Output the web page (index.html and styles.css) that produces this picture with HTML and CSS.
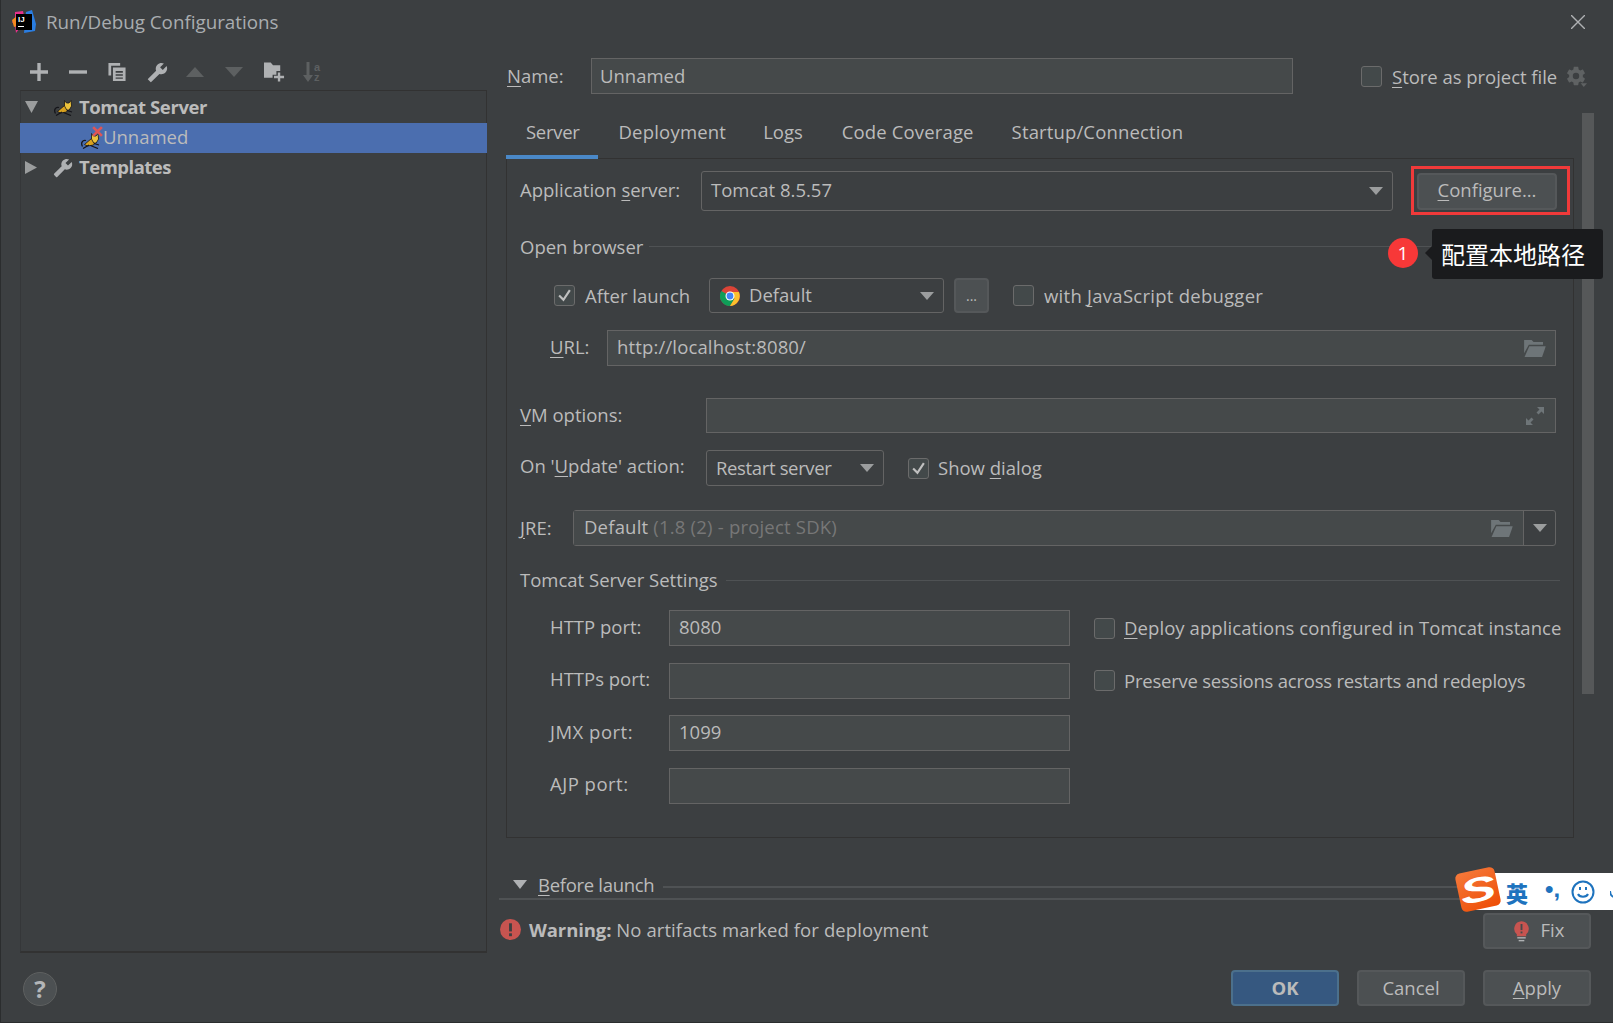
FILE: index.html
```html
<!DOCTYPE html>
<html lang="en">
<head>
<meta charset="utf-8">
<title>Run/Debug Configurations</title>
<link rel="stylesheet" href="styles.css">
</head>
<body>
<svg class="defs" width="0" height="0" aria-hidden="true">
  <defs>
    <symbol id="cat" viewBox="0 0 20 16">
      <path d="M1.500 13.500C-.5 10 1.500 6.500 5 7.500" fill="none" stroke="#15151a" stroke-width="1.300"/>
      <path d="M3.500 11.500L10.500 5.500 15 7.500 12.500 12 6.500 13z" fill="#d9a21f" stroke="#15151a" stroke-width=".8"/>
      <path d="M10.500 .5l2 2.500h2.500l2-2.500 .6 5.500-2.400 4h-2.500L10.500 6z" fill="#ecc23c" stroke="#15151a" stroke-width=".8"/>
      <path d="M2 15.500l6-3.500M9.500 12.500l7.500 3M13 10.500l5 1.500" fill="none" stroke="#15151a" stroke-width="1.300"/>
    </symbol>
    <symbol id="wrench" viewBox="0 0 24 24">
      <path transform="translate(24 0) scale(-1 1)" d="M22.700 19l-9.100-9.100c.9-2.300.4-5-1.500-6.900-2-2-5-2.400-7.400-1.300L9 6 6 9 1.600 4.700C.4 7.100.9 10.100 2.900 12.100c1.900 1.900 4.600 2.400 6.900 1.500l9.100 9.100c.4.4 1 .4 1.400 0l2.300-2.300c.5-.4.5-1.100.1-1.400z"/>
    </symbol>
    <symbol id="folder" viewBox="0 0 24 18">
      <path d="M1 0h8l2 2h10v3H6L1 14z"/>
      <path d="M6.500 6.500H24L20 18H1.500z"/>
    </symbol>
  </defs>
</svg>
<div class="window">
  <header class="titlebar">
    <svg class="app-icon" viewBox="0 0 24 24">
      <path d="M3 2l8-1 2 10-9 12-1-8-3-3 3-3z" fill="#e8308a"/>
      <path d="M0 10l5-4 3 9-6 2z" fill="#f58a1f"/>
      <path d="M14 2l6-2 4 14-1 7-11 2z" fill="#2a7de1"/>
      <rect x="4" y="4" width="16" height="16" fill="#000"/>
      <text x="6" y="12" class="app-icon-text">IJ</text>
      <rect x="6" y="16" width="6" height="1" fill="#fff"/>
    </svg>
    <span class="title">Run/Debug Configurations</span>
    <svg class="close" viewBox="0 0 14 14"><path d="M0 0l14 14M14 0L0 14"/></svg>
  </header>
  <main class="content">
    <aside class="left">
      <div class="toolbar">
        <span class="tool"><svg viewBox="0 0 16 16"><path class="bar" d="M6.500 0h3v6.500H16v3H9.500V16h-3V9.500H0v-3h6.500z"/></svg></span>
        <span class="tool"><svg viewBox="0 0 16 16"><rect class="bar" y="6.500" width="16" height="3"/></svg></span>
        <span class="tool"><svg viewBox="0 0 19 20"><path class="bar" d="M0 0h13v3H3v11H0z"/><path class="bar" d="M5 5h14v15H5zm3 4v1.800h8V9zm0 3.500v1.800h8v-1.800zM8 16v1.500h8V16z" fill-rule="evenodd"/></svg></span>
        <span class="tool tool-wide"><svg viewBox="0 0 24 24"><use href="#wrench" class="bar"/></svg></span>
        <span class="tool off"><svg viewBox="0 0 18 10"><path d="M9 0l9 10H0z"/></svg></span>
        <span class="tool off"><svg viewBox="0 0 18 10"><path d="M0 0h18L9 10z"/></svg></span>
        <span class="tool"><svg class="folder-plus" viewBox="0 0 22 20"><path class="bar" d="M0 0h7l2.500 3H17v6h-4v4H9v3H0z"/><path class="bar" d="M14.500 10.500h2.500v3.500h4v2.500h-4V20h-2.500v-3.500h-4V14h4z"/></svg></span>
        <span class="tool off sort">
          <svg viewBox="0 0 10 20"><path d="M3.500 0h3v13H10l-5 7-5-7h3.500z"/></svg>
          <span class="sort-letters">a<br>z</span>
        </span>
      </div>
      <div class="tree">
        <div class="tree-row">
          <svg class="twisty" viewBox="0 0 13 12"><path d="M0 0h13L6.500 12z"/></svg>
          <svg class="cat"><use href="#cat"/></svg>
          <b class="tx tree-server">Tomcat Server</b>
        </div>
        <div class="tree-row selected">
          <span class="cat-error">
            <svg class="cat"><use href="#cat"/></svg>
            <svg class="cat-x" viewBox="0 0 10 10"><path d="M1 1l8 8M9 1L1 9"/></svg>
          </span>
          <span class="tx">Unnamed</span>
        </div>
        <div class="tree-row">
          <svg class="twisty right-twisty" viewBox="0 0 12 13"><path d="M0 0l12 6.500L0 13z"/></svg>
          <svg class="tree-wrench" viewBox="0 0 24 24"><use href="#wrench"/></svg>
          <b class="tx tree-templates">Templates</b>
        </div>
      </div>
      <div class="help">?</div>
    </aside>

    <section class="right">
      <div class="upper">
        <div class="name-row">
          <label class="name-label tx1"><u>N</u>ame:</label>
          <div class="field name-field"><span class="tx1">Unnamed</span></div>
          <span class="check store-check"></span>
          <span class="store-label"><u>S</u>tore as project file</span>
          <svg class="gear" viewBox="0 0 24 24"><path d="M19.400 13c.1-.3.100-.7.100-1s0-.7-.1-1l2.200-1.600c.2-.2.300-.5.100-.7l-2-3.500c-.1-.2-.4-.3-.6-.2l-2.500 1c-.5-.4-1.100-.7-1.700-1l-.4-2.600c0-.2-.3-.4-.5-.4h-4c-.2 0-.5.2-.5.400l-.4 2.600c-.6.300-1.200.6-1.700 1l-2.500-1c-.2-.1-.5 0-.6.2l-2 3.500c-.1.200-.1.500.1.700L4.600 11c0 .3-.1.700-.1 1s0 .7.1 1l-2.200 1.600c-.2.200-.3.500-.1.700l2 3.500c.1.200.4.300.6.200l2.500-1c.5.400 1.100.7 1.700 1l.4 2.600c0 .2.300.4.500.4h4c.2 0 .5-.2.500-.4l.4-2.600c.6-.3 1.200-.6 1.700-1l2.500 1c.2.100.5 0 .6-.2l2-3.500c.1-.2.100-.5-.1-.7zM12 15.500a3.500 3.500 0 1 1 0-7 3.500 3.500 0 0 1 0 7z"/><path d="M17 20h7l-3.500 4z"/></svg>
        </div>
        <nav class="tabs">
          <span class="tab active">Server</span>
          <span class="tab tab-deploy">Deployment</span>
          <span class="tab tab-logs">Logs</span>
          <span class="tab tab-code">Code Coverage</span>
          <span class="tab tab-code">Startup/Connection</span>
        </nav>
        <div class="panel">
          <div class="row server-row">
            <label class="server-label tx">Application <u>s</u>erver:</label>
            <div class="combo server-combo"><span class="tx">Tomcat 8.5.57</span><i class="caret"></i></div>
            <button class="btn configure"><span class="tx"><u>C</u>onfigure...</span></button>
          </div>
          <div class="group-head browser-head"><span>Open browser</span><i class="rule"></i></div>
          <div class="row browser-row">
            <span class="check checked"><svg viewBox="0 0 14 14"><path d="M2 7l4 4 6-9"/></svg></span>
            <span class="after-label">After launch</span>
            <div class="combo browser-combo">
              <svg class="chrome" viewBox="0 0 20 20">
                <circle cx="10" cy="10" r="10" fill="#db4437"/>
                <path d="M10 10L1.300 5A10 10 0 0 0 10 20l4.500-7z" fill="#0f9d58"/>
                <path d="M10 6h8.900A10 10 0 0 1 10 20l4.500-7.500z" fill="#fbc02d"/>
                <circle cx="10" cy="10" r="4.500" fill="#fff"/>
                <circle cx="10" cy="10" r="3.400" fill="#4285f4"/>
              </svg>
              <span class="tx1">Default</span><i class="caret"></i>
            </div>
            <button class="btn dots">...</button>
            <span class="check js-check"></span>
            <span class="check-label js-label">with <u>J</u>avaScript debugger</span>
          </div>
          <div class="row url-row">
            <label class="url-label tx"><u>U</u>RL:</label>
            <div class="field url-field"><span class="tx url-text">http://localhost:8080/</span><svg class="folder" viewBox="0 0 24 18"><use href="#folder"/></svg></div>
          </div>
          <div class="row vm-row">
            <label class="opt-label tx1"><u>V</u>M options:</label>
            <div class="field vm-field"><svg class="expand" viewBox="0 0 18 18"><path d="M11 0h7v7l-2.500-2.500-3 3-2-2 3-3zM0 11l2.500 2.500 3-3 2 2-3 3L7 18H0z"/></svg></div>
          </div>
          <div class="row update-row">
            <label class="opt-label tx3">On '<u>U</u>pdate' action:</label>
            <div class="combo update-combo"><span class="tx1 restart">Restart server</span><i class="caret"></i></div>
            <span class="check checked dialog-check"><svg viewBox="0 0 14 14"><path d="M2 7l4 4 6-9"/></svg></span>
            <span class="check-label tx1">Show <u>d</u>ialog</span>
          </div>
          <div class="row jre-row">
            <label class="jre-label tx1"><u>J</u>RE:</label>
            <div class="jre-combo">
              <div class="jre-main"><span class="tx jre-text">Default <em>(1.8 (2) - project SDK)</em></span><svg class="folder" viewBox="0 0 24 18"><use href="#folder"/></svg></div>
              <div class="jre-drop"><i class="caret"></i></div>
            </div>
          </div>
          <div class="group-head tomcat-head"><span class="tx1">Tomcat Server Settings</span><i class="rule"></i></div>
          <div class="ports">
            <label class="tx">HTTP port:</label><div class="field"><span class="tx">8080</span></div>
            <div class="port-option"><span class="check"></span><span class="check-label tx1 deploy-label"><u>D</u>eploy applications configured in Tomcat instance</span></div>
            <label class="tx">HTTPs port:</label><div class="field"></div>
            <div class="port-option"><span class="check"></span><span class="check-label preserve-label">Preserve sessions across restarts and redeploys</span></div>
            <label class="tx wide-port">JMX port:</label><div class="field"><span class="tx">1099</span></div><div></div>
            <label class="tx wide-port">AJP port:</label><div class="field"></div><div></div>
          </div>
        </div>
      </div>
      <div class="before">
        <svg class="before-twisty tx3" viewBox="0 0 14 9"><path d="M0 0h14L7 9z"/></svg>
        <span class="tx3 before-label"><u>B</u>efore launch</span>
        <i class="rule"></i>
      </div>
      <div class="warning">
        <svg class="warn-icon tx" viewBox="0 0 22 22"><circle cx="11" cy="11" r="11" fill="#c75450"/><rect x="9.500" y="4.500" width="3" height="8.500" fill="#3c3f41"/><rect x="9.500" y="15" width="3" height="3" fill="#3c3f41"/></svg>
        <span class="tx warning-text"><b>Warning:</b> No artifacts marked for deployment</span>
        <button class="btn fix">
          <svg class="bulb" viewBox="0 0 16 22"><path d="M8 0a8 8 0 0 1 5 14v2H3v-2A8 8 0 0 1 8 0z" fill="#c75450"/><rect x="7" y="3" width="2" height="6.500" fill="#45494a"/><rect x="7" y="11" width="2" height="2" fill="#45494a"/><rect x="3.500" y="17" width="9" height="1.500" fill="#afb1b3"/><rect x="5" y="20" width="6" height="1.500" fill="#afb1b3"/></svg>
          <span class="tx">Fix</span>
        </button>
      </div>
      <div class="actions">
        <button class="btn primary"><span class="tx1">OK</span></button>
        <button class="btn"><span class="tx1">Cancel</span></button>
        <button class="btn"><span class="tx1"><u>A</u>pply</span></button>
      </div>
      <div class="scrollbar"></div>
    </section>
  </main>

  <div class="highlight"></div>
  <div class="callout">
    <span class="badge">1</span>
    <div class="tip">配置本地路径</div>
  </div>
  <div class="ime">
    <span class="ime-logo"><span>S</span></span>
    <span class="ime-zh">英</span>
    <span class="ime-punct">•,</span>
    <svg class="ime-smile" viewBox="0 0 24 24"><circle cx="12" cy="12" r="10.500"/><path d="M7 14c1.500 3.500 8.500 3.500 10 0"/><path d="M9 7v3M15 7v3"/></svg>
    <svg class="ime-mic" viewBox="0 0 14 24"><rect x="3" y="2" width="8" height="13" rx="4" fill="#1e73be"/><path d="M0 11c0 9 14 9 14 0M7 18v5" fill="none" stroke="#1e73be" stroke-width="2"/></svg>
  </div>
</div>
</body>
</html>
```

FILE: styles.css
```css
* { box-sizing: border-box; }
html, body { margin: 0; padding: 0; }
body { background: #3c3f41; font-family: "Open Sans", "Noto Sans CJK SC", sans-serif; font-size: 18.5px; color: #bbbbbb; }
.defs { position: absolute; }
u { text-underline-offset: 3px; text-decoration-thickness: 1px; }
em { font-style: normal; color: #777; }
i { display: block; }

/* optical lift of the text inside centred flex rows */
.tx1 { margin-bottom: 2px; }
.tx { margin-bottom: 4px; }
.tx3 { margin-bottom: 6px; }

.window { position: relative; width: 1613px; height: 1023px; overflow: hidden; background: #3c3f41; box-shadow: inset 1px -1px 0 #2b2d2e; display: flex; flex-direction: column; }

.titlebar { height: 44px; flex: none; display: flex; align-items: center; padding-left: 12px; }
.app-icon { width: 24px; height: 24px; flex: none; }
.app-icon-text { font: bold 8px "Liberation Sans", sans-serif; fill: #fff; }
.title { margin-left: 10px; color: #a9adb0; font-size: 18.800px; }
.close { width: 14px; height: 14px; margin-left: auto; margin-right: 28px; fill: none; stroke: #afb1b3; stroke-width: 1.400; }

.content { flex: 1; display: flex; min-height: 0; }
.left { width: 487px; flex: none; padding-left: 20px; display: flex; flex-direction: column; }
.toolbar { height: 46px; flex: none; display: flex; align-items: flex-start; padding-left: 10px; padding-top: 17px; }
.tool { width: 39px; height: 22px; flex: none; display: flex; align-items: center; justify-content: flex-start; fill: #afb1b3; }
.tool svg { width: 18px; height: 18px; }
.tool .bar { fill: #afb1b3; }
.tool.off svg { fill: #5d6061; }
.tool.off { fill: #5d6061; }
.tool-wide svg { width: 21px; height: 21px; }
.tool .folder-plus { width: 21px; height: 20px; }
.tool.sort svg { width: 10px; height: 20px; }
.sort-letters { margin-left: 1px; font: bold 11px/10px "Liberation Sans", sans-serif; color: #5d6061; }

.tree { height: 863px; flex: none; border: 1px solid #323232; border-left-color: #353739; border-bottom-width: 2px; padding-top: 2px; }
.tree-row { height: 30px; display: flex; align-items: center; position: relative; }
.tree-row b { font-weight: 700; }
.tree-server { letter-spacing: -.4px; }
.tree-templates { letter-spacing: -.5px; }
.twisty { width: 13px; height: 12px; margin-left: 4px; margin-bottom: 2px; fill: #9b9d9e; flex: none; }
.right-twisty { width: 12px; height: 13px; }
.cat { width: 20px; height: 16px; margin-left: 16px; flex: none; display: block; }
.tree-row > b { margin-left: 5px; }
.tree-row > .tree-templates { margin-left: 6px; }
.selected { background: #4b6eaf; margin: 0 -1px 0 -1px; padding-left: 61px; }
.cat-error { position: relative; flex: none; width: 21px; height: 22px; margin-right: 1px; display: flex; align-items: flex-end; }
.cat-error .cat { margin-left: 0; }
.cat-x { position: absolute; left: 11px; top: -1px; width: 11px; height: 11px; fill: none; stroke: #e05555; stroke-width: 2.400; }
.tree-wrench { width: 20px; height: 20px; margin-left: 16px; fill: #afb1b3; flex: none; }
.help { width: 34px; height: 34px; margin: 19px 0 0 3px; border-radius: 50%; border: 1px solid #5e6060; background: #4c5052; display: flex; align-items: center; justify-content: center; font-weight: 700; font-size: 24px; line-height: 1; color: #b4b6b8; }

.right { position: relative; flex: 1; margin-left: 12px; padding-right: 22px; min-width: 0; }
.upper { margin-left: 7px; width: 1068px; padding-top: 14px; }

.field { height: 36px; flex: none; background: #45494a; border: 1px solid #646464; display: flex; align-items: center; padding-left: 9px; justify-content: space-between; padding-right: 9px; }
.combo { height: 36px; flex: none; border: 1px solid #646464; border-radius: 3px; display: flex; align-items: center; padding-left: 9px; position: relative; }
.caret { width: 0; height: 0; border-left: 7px solid transparent; border-right: 7px solid transparent; border-top: 8px solid #9b9d9e; }
.combo .caret { position: absolute; right: 9px; top: 50%; margin-top: -4px; }
.check { width: 21px; height: 21px; flex: none; border: 1.500px solid #6b6b6b; border-radius: 3px; background: #43494a; display: flex; align-items: center; justify-content: center; }
.check svg { width: 15px; height: 15px; fill: none; stroke: #c0c0c0; stroke-width: 2; }
.check-label { margin-left: 9px; white-space: nowrap; }
.btn { height: 36px; width: 108px; flex: none; padding: 0; background: #4c5052; border: 2px solid #55585a; border-radius: 4px; color: #bbbbbb; font: inherit; display: flex; align-items: center; justify-content: center; }
.folder { width: 23px; height: 17px; fill: #6e7578; flex: none; }

.name-row { height: 36px; display: flex; align-items: center; }
.name-label { width: 85px; flex: none; padding-left: 1px; }
.name-field { width: 702px; padding-left: 8px; }
.store-check { margin-left: 68px; }
.store-label { margin-left: 10px; white-space: nowrap; flex: none; letter-spacing: -.03px; }
.gear { width: 22px; height: 22px; margin-left: 8px; flex: none; fill: #5f6263; }

.tabs { height: 46px; margin-top: 19px; display: flex; margin-bottom: -1px; }
.tab { padding: 0 19px 10px; display: flex; align-items: center; height: 46px; }
.tab.active { border-bottom: 4px solid #4a88c7; padding: 0 19px 6px 20px; letter-spacing: -.3px; }
.tab-deploy { letter-spacing: .2px; padding-left: 20px; padding-right: 18px; }
.tab-logs { padding-right: 20px; }
.tab-code { letter-spacing: .14px; }

.panel { height: 680px; border: 1px solid #323232; padding: 12px 13px 0; }
.row { display: flex; align-items: center; }
.rule { flex: 1; height: 1px; background: #4f5254; margin-left: 8px; }
.group-head { display: flex; align-items: center; height: 24px; }

.server-row { height: 40px; }
.server-label { width: 181px; flex: none; }
.server-combo { width: 692px; height: 40px; }
.configure { width: 140px; height: 37px; margin-left: 24px; }

.browser-head { margin-top: 23px; }
.browser-head .rule { margin-left: 6px; }
.browser-row { height: 35px; margin-top: 20px; padding-left: 34px; }
.after-label { width: 124px; flex: none; margin-left: 10px; white-space: nowrap; }
.browser-combo { width: 235px; height: 35px; padding-left: 10px; }
.chrome { width: 20px; height: 20px; margin-right: 9px; flex: none; }
.dots { width: 35px; height: 35px; margin-left: 10px; font-size: 14px; }
.js-check { margin-left: 24px; }
.js-label { letter-spacing: .26px; margin-left: 10px; }

.url-row { height: 36px; margin-top: 17px; padding-left: 30px; }
.url-label { width: 57px; flex: none; }
.url-field { width: 949px; }
.url-text { letter-spacing: .15px; }
.vm-row { height: 35px; margin-top: 32px; }
.opt-label { width: 186px; flex: none; white-space: nowrap; }
.vm-field { width: 850px; height: 35px; justify-content: flex-end; padding-right: 11px; }
.expand { width: 18px; height: 18px; fill: #6e7578; }
.update-row { height: 36px; margin-top: 17px; }
.update-combo { width: 178px; }
.restart { letter-spacing: -.35px; }
.dialog-check { margin-left: 24px; }
.jre-row { height: 36px; margin-top: 24px; }
.jre-label { width: 53px; flex: none; }
.jre-combo { width: 983px; flex: none; height: 36px; border: 1px solid #646464; border-radius: 3px; display: flex; }
.jre-main { width: 950px; flex: none; background: #45494a; border-right: 1px solid #646464; display: flex; align-items: center; justify-content: space-between; padding: 0 10px; }
.jre-text { letter-spacing: .2px; }
.jre-drop { flex: 1; display: flex; align-items: center; justify-content: center; }

.tomcat-head { margin-top: 22px; }
.ports { margin-top: 18px; display: grid; grid-template-columns: 119px 401px 1fr; grid-auto-rows: 36px; row-gap: 16.670px; padding-left: 30px; align-items: center; }
.ports .field { height: 36px; }
.wide-port { letter-spacing: .5px; }
.port-option { display: flex; align-items: center; margin-left: 24px; white-space: nowrap; }
.deploy-label { letter-spacing: .08px; }
.preserve-label { letter-spacing: -.23px; }

.before { height: 24px; margin-top: 38px; display: flex; align-items: center; border-bottom: 2px solid #4f5254; padding-left: 14px; }
.before-twisty { width: 14px; height: 9px; fill: #afb1b3; flex: none; margin-right: 11px; }
.before-label { letter-spacing: -.3px; }
.before .rule { margin-left: 9px; height: 2px; }

.warning { height: 36px; margin-top: 13px; display: flex; align-items: center; }
.warn-icon { width: 21px; height: 21px; flex: none; margin-left: 1px; margin-right: 8px; }
.warning b { font-weight: 700; letter-spacing: -.1px; }
.warning-text { letter-spacing: .09px; }
.fix { margin-left: auto; padding-left: 4px; }
.bulb { width: 15px; height: 21px; margin-right: 12px; flex: none; }

.actions { margin-top: 21px; display: flex; justify-content: flex-end; gap: 18px; }
.primary { background: #365880; border-color: #4c708c; font-weight: 700; }

.scrollbar { position: absolute; left: 1083px; top: 69px; width: 12px; height: 581px; background: #565859; }

.highlight { position: absolute; left: 1411px; top: 166px; width: 159px; height: 49px; border: 3px solid #f03a3a; }
.callout { position: absolute; left: 1388px; top: 229px; display: flex; align-items: center; }
.badge { width: 30px; height: 30px; border-radius: 50%; background: #f73838; color: #fff; font-size: 19px; display: flex; align-items: center; justify-content: center; margin-top: -2px; }
.tip { position: relative; margin-left: 14px; width: 171px; height: 50px; background: #1a1b1d; border-radius: 3px; color: #fff; font-size: 24px; display: flex; align-items: center; padding-left: 9px; padding-bottom: 2px; font-family: "Noto Sans CJK SC", sans-serif; }
.tip::before { content: ""; position: absolute; left: -7px; top: 17px; border-top: 7px solid transparent; border-bottom: 7px solid transparent; border-right: 7px solid #1a1b1d; }

.ime { position: absolute; left: 1475px; top: 873px; width: 138px; height: 37px; background: #fff; display: flex; align-items: center; color: #1e73be; }
.ime-logo { position: absolute; left: -17px; top: -3px; width: 40px; height: 39px; border-radius: 5px; background: linear-gradient(160deg, #f5793b, #ee4d05); transform: rotate(-12deg); display: flex; align-items: center; justify-content: center; overflow: hidden; }
.ime-logo span { color: #fff; font: italic 900 36px/1 "Liberation Sans", sans-serif; transform: scale(1.500, .95); }
.ime-zh { margin-left: 31px; font: 900 22px/1 "Noto Sans CJK SC", sans-serif; }
.ime-punct { margin-left: 17px; font: 700 24px/1 "Liberation Sans", sans-serif; margin-bottom: 6px; }
.ime-smile { width: 24px; height: 24px; margin-left: 11px; fill: none; stroke: #1e73be; stroke-width: 2; flex: none; }
.ime-mic { width: 14px; height: 24px; margin-left: 15px; flex: none; }
```
